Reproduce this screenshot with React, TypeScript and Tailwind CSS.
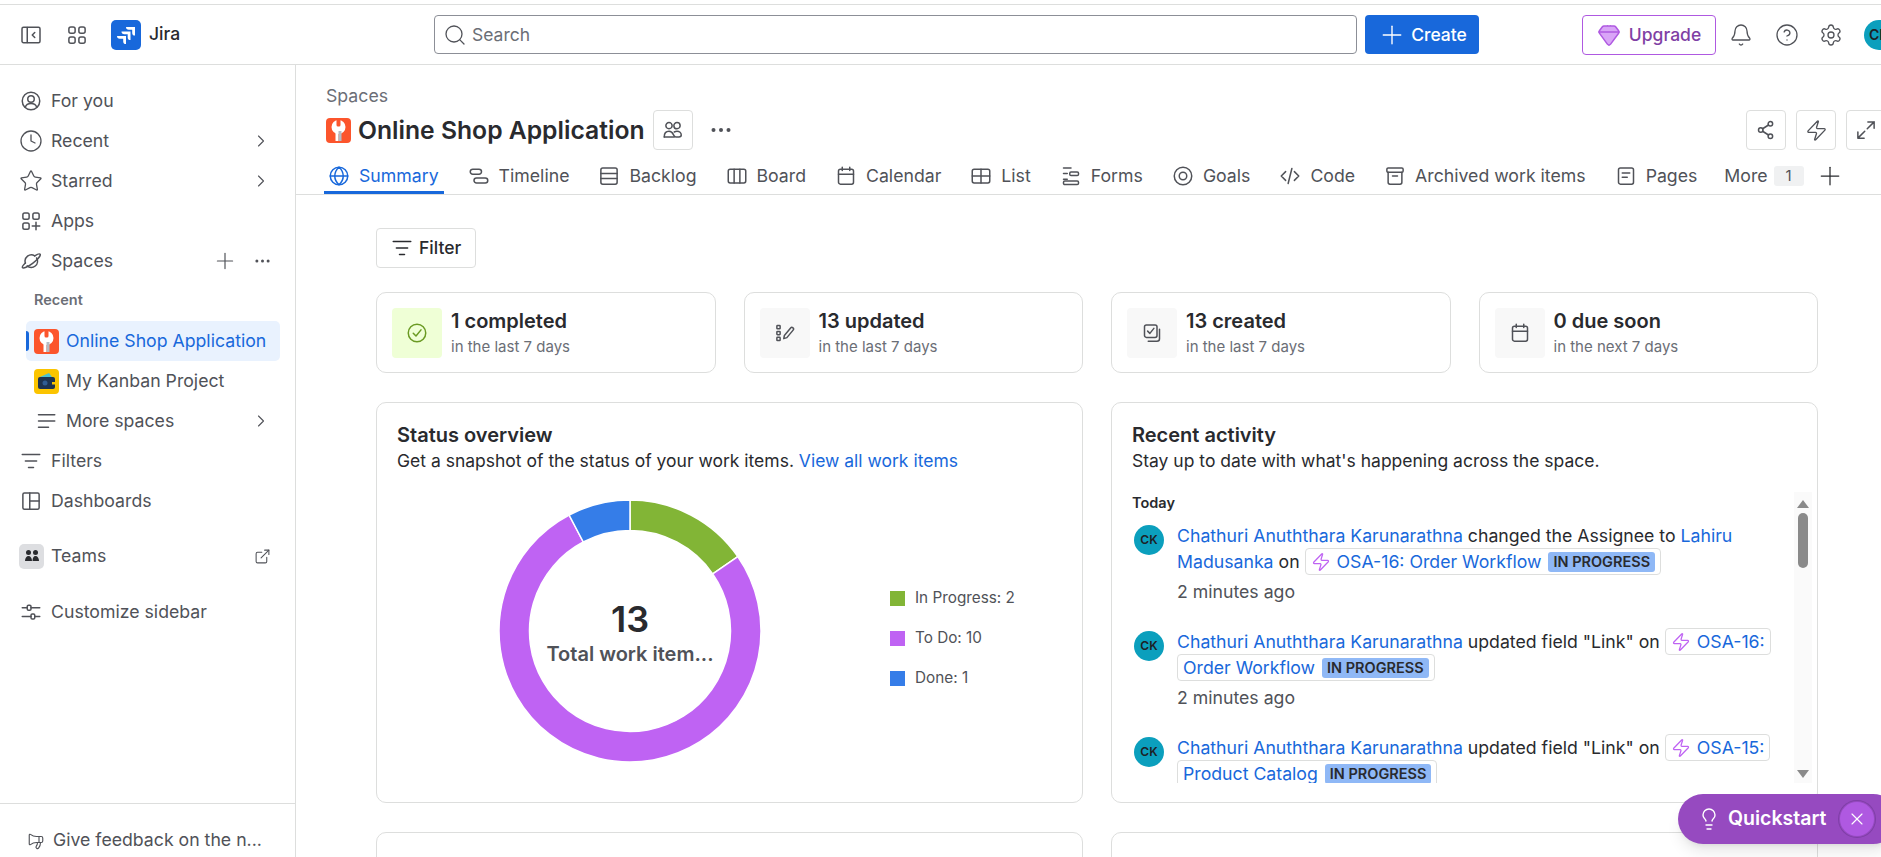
import React from 'react';
import { Bell, ChevronRight, CircleHelp, Clock, ExternalLink, Gem, Lightbulb, Megaphone, Plus, Search, Settings, Star, X, Zap } from 'lucide-react';

type IconProps = { size?: number; className?: string; children: React.ReactNode };

// 16 unit grid, same proportions as the product's own icon set
function Ico({ size = 20, className = 'text-[#505258]', children }: IconProps) {
  return (
    <svg width={size} height={size} viewBox="0 0 16 16" fill="none" stroke="currentColor" strokeWidth="1.2" strokeLinecap="round" strokeLinejoin="round" className={`shrink-0 ${className}`}>
      {children}
    </svg>
  );
}

function Dots({ width = 20 }: { width?: number }) {
  return (
    <svg width={width} height="6" viewBox="0 0 20 6" fill="currentColor" className="shrink-0 text-[#505258]">
      <circle cx="2.500" cy="3" r="2" />
      <circle cx="10" cy="3" r="2" />
      <circle cx="17.500" cy="3" r="2" />
    </svg>
  );
}

const PanelIcon = () => <Ico><rect x="0.8" y="1.8" width="14.4" height="12.4" rx="1.2" /><path d="M5 2v12M11 6 9 8l2 2" /></Ico>;
const GridIcon = () => <Ico><rect x="1.5" y="1.5" width="5" height="5" rx="1.6" /><rect x="9.5" y="1.5" width="5" height="5" rx="1.6" /><rect x="1.5" y="9.5" width="5" height="5" rx="1.6" /><rect x="9.5" y="9.5" width="5" height="5" rx="1.6" /></Ico>;
const UserIcon = () => <Ico><circle cx="8" cy="8" r="7" /><circle cx="8" cy="6.3" r="2.6" /><path d="M3.4 13c.6-2 2-3 4.6-3s4 1 4.6 3" /></Ico>;
const AppsIcon = () => <Ico><rect x="1.5" y="1.5" width="5" height="5" rx="1.4" /><rect x="9.5" y="1.5" width="5" height="5" rx="1.4" /><rect x="1.5" y="9.5" width="5" height="5" rx="1.4" /><path d="M12 9v6M9 12h6" /></Ico>;
const PlanetIcon = () => <Ico><path d="M12.5 5.6a5 5 0 0 1-7.6 6.3M3.5 9.6A5 5 0 0 1 11 3.9" /><path d="M11 3.9c2-1.3 3.9-1.9 4.3-1.3.6 1-2.2 4.4-6 7.3-3.9 2.900-7.500 4.300-8.100 3.400-.4-.6.700-2.200 2.300-3.700" /></Ico>;
const FilterIcon = ({ className }: { className?: string }) => <Ico className={className}><path d="M1 2.800h14M3.500 8h9M6 13.200h4" /></Ico>;
const LinesIcon = () => <Ico><path d="M2 3h13M2 8h13M2 13h8" /></Ico>;
const DashboardIcon = () => <Ico><rect x="1.500" y="1.500" width="13" height="13" rx="1.200" /><path d="M7 1.500v13M7 8h7.500" /></Ico>;
const SlidersIcon = () => <Ico><path d="M1 4.500h4M8 4.500h7M1 11.500h7M11 11.500h4" /><rect x="5" y="2.500" width="3" height="4" rx="1" /><rect x="8" y="9.500" width="3" height="4" rx="1" /></Ico>;
const UsersOutline = () => <Ico><circle cx="4.800" cy="4.500" r="2.500" /><circle cx="11.200" cy="4.500" r="2.500" /><path d="M1 13.500c0-2.700 1.500-4.500 3.800-4.500 1.800 0 2.800 1 3.400 2.500.4 1 1 2 2 2h2.600c1 0 1.800-.6 1.800-1.500 0-1.700-1.500-3-3.400-3-.8 0-1.500.2-2.200.6" /><path d="M1 13.500h8" /></Ico>;
const ShareIcon = () => <Ico><circle cx="11.500" cy="3" r="1.800" /><circle cx="3.800" cy="8" r="1.800" /><circle cx="11.500" cy="13" r="1.800" /><path d="m5.300 7 4.700-3M5.300 9l4.700 3" /></Ico>;
const ExpandIcon = () => <Ico><path d="M9.500 1.500h5v5M14.500 1.500 9 7M6.500 14.500h-5v-5M1.500 14.500 7 9" /></Ico>;
const GlobeIcon = () => <Ico className="text-[#1868db]"><circle cx="8" cy="8" r="7" /><path d="M1 8h14M8 1c-4.500 4-4.500 10 0 14M8 1c4.500 4 4.500 10 0 14" /></Ico>;
const TimelineIcon = () => <Ico><rect x="1" y="2.500" width="9" height="4" rx="2" /><rect x="4" y="9.500" width="11" height="4" rx="2" /></Ico>;
const BacklogIcon = () => <Ico><rect x="1.500" y="1.500" width="13" height="13" rx="1.500" /><path d="M1.500 6h13M1.500 10h13" /></Ico>;
const BoardIcon = () => <Ico><rect x="1" y="2.500" width="14" height="11" rx="1.500" /><path d="M5.700 2.500v11M10.300 2.500v11" /></Ico>;
const CalendarIcon = () => <Ico><rect x="2" y="2.500" width="12" height="12" rx="1.500" /><path d="M2 6.500h12M5 1v2.500M11 1v2.500" /></Ico>;
const ListIcon = () => <Ico><rect x="1" y="2.500" width="14" height="11" rx="1.500" /><path d="M1 8h14M8 2.500v11" /></Ico>;
const FormsIcon = () => <Ico><path d="M2 1.500h6M2 6h3" /><rect x="7" y="4.800" width="7" height="2.800" rx="1" /><path d="M2 10.500h3" /><rect x="2" y="12" width="12" height="2.800" rx="1" /></Ico>;
const GoalsIcon = () => <Ico><circle cx="8" cy="8" r="7" /><circle cx="8" cy="8" r="3" /></Ico>;
const CodeIcon = () => <Ico><path d="M4.500 4.500 1 8l3.500 3.500M11.500 4.500 15 8l-3.500 3.500M9.500 2l-3 12" /></Ico>;
const ArchiveIcon = () => <Ico><rect x="1.500" y="1.500" width="13" height="3.500" rx="1" /><path d="M2.500 5v8a1.500 1.500 0 0 0 1.500 1.500h8a1.500 1.500 0 0 0 1.500-1.500V5M6 8h4" /></Ico>;
const PagesIcon = () => <Ico><rect x="2" y="1.500" width="12" height="13" rx="1.500" /><path d="M5 5.500h6M5 9h4" /></Ico>;
const CheckCircle = () => <Ico className="text-[#6a9a23]"><circle cx="8" cy="8" r="7" /><path d="m5 8.200 2.200 2.200L11.200 5.500" /></Ico>;
const UpdatedIcon = () => <Ico><rect x="1.500" y="2" width="2.600" height="2.600" rx=".5" /><rect x="1.500" y="6.700" width="2.600" height="2.600" rx=".5" /><rect x="1.500" y="11.400" width="2.600" height="2.600" rx=".5" /><path d="m7 12.500.5-2.500 5-6a1.300 1.300 0 0 1 2 1.700l-5 6z" /></Ico>;
const CreatedIcon = () => <Ico><rect x="2" y="1.500" width="10" height="10" rx="1.500" /><path d="m4.500 6.500 1.800 1.800 3.200-4M14 5v7.500a2 2 0 0 1-2 2H5" /></Ico>;

function JiraLogo() {
  return (
    <div className="w-[30px] h-[30px] rounded-[5px] bg-[#1868db] flex items-center justify-center shrink-0">
      <svg width="22" height="22" viewBox="0 0 22 22" fill="#fff">
        <path d="M11 3h9v8.500c-1.800 0-2.800-1-2.800-2.600V5.800h-3.400C12 5.800 11 4.800 11 3z" />
        <path d="M6.500 7.500h9v8.500c-1.800 0-2.800-1-2.800-2.600v-3.100H9.300c-1.800 0-2.800-1-2.800-2.800z" />
        <path d="M2 12h9v8c-1.800 0-2.800-1-2.800-2.600v-2.600H4.800C3 14.800 2 13.800 2 12z" />
      </svg>
    </div>
  );
}

function WrenchLogo() {
  return (
    <svg width="25" height="25" viewBox="0 0 25 25" className="shrink-0">
      <rect width="25" height="25" rx="4" fill="#fc552c" />
      <circle cx="12.500" cy="9" r="7" fill="#fff" />
      <rect x="10.500" y="0" width="4" height="8.500" rx="1.500" fill="#fc552c" />
      <path d="M9.500 13h3v10h-3z" fill="#fff" />
      <path d="M12.500 13h3v10h-3z" fill="#b5bcc4" />
    </svg>
  );
}

function WalletLogo() {
  return (
    <svg width="25" height="25" viewBox="0 0 25 25" className="shrink-0">
      <rect width="25" height="25" rx="4" fill="#fbc400" />
      <path d="M6 8 15 4l3 4z" fill="#4bc1d2" />
      <rect x="4" y="8" width="17" height="12" rx="2" fill="#1d3250" />
      <circle cx="11" cy="14" r="2.500" fill="#2f5c94" />
      <rect x="18" y="13" width="3" height="2.500" fill="#fbc400" />
    </svg>
  );
}

const NAV_TOP = [
  { label: 'For you', icon: <UserIcon /> },
  { label: 'Recent', icon: <Clock size={24} strokeWidth={1.3} className="text-[#505258] -m-[2px]" />, chevron: true },
  { label: 'Starred', icon: <Star size={24} strokeWidth={1.3} className="text-[#505258] -m-[2px]" />, chevron: true },
  { label: 'Apps', icon: <AppsIcon /> },
];

const TABS = [
  { label: 'Summary', icon: <GlobeIcon />, active: true },
  { label: 'Timeline', icon: <TimelineIcon /> },
  { label: 'Backlog', icon: <BacklogIcon /> },
  { label: 'Board', icon: <BoardIcon /> },
  { label: 'Calendar', icon: <CalendarIcon /> },
  { label: 'List', icon: <ListIcon /> },
  { label: 'Forms', icon: <FormsIcon /> },
  { label: 'Goals', icon: <GoalsIcon /> },
  { label: 'Code', icon: <CodeIcon /> },
  { label: 'Archived work items', icon: <ArchiveIcon /> },
  { label: 'Pages', icon: <PagesIcon /> },
];

const STATS = [
  { title: '1 completed', sub: 'in the last 7 days', icon: <CheckCircle />, tile: 'bg-[#efffd6]' },
  { title: '13 updated', sub: 'in the last 7 days', icon: <UpdatedIcon />, tile: 'bg-[#f8f8f8]' },
  { title: '13 created', sub: 'in the last 7 days', icon: <CreatedIcon />, tile: 'bg-[#f8f8f8]' },
  { title: '0 due soon', sub: 'in the next 7 days', icon: <CalendarIcon />, tile: 'bg-[#f8f8f8]' },
];

const LEGEND = [
  { label: 'In Progress: 2', color: 'bg-[#82b536]' },
  { label: 'To Do: 10', color: 'bg-[#bf63f3]' },
  { label: 'Done: 1', color: 'bg-[#357de8]' },
];

function NavRow({ icon, label, right }: { icon: React.ReactNode; label: string; right?: React.ReactNode }) {
  return (
    <div className="h-10 flex items-center pl-[21px] pr-[25px] text-[#505258]">
      <span className="w-[30px] shrink-0 flex">{icon}</span>
      <span className="flex-1 truncate">{label}</span>
      {right}
    </div>
  );
}

function Sidebar() {
  return (
    <aside className="w-[296px] shrink-0 border-r border-[#dddedd] flex flex-col text-[17.7px]">
      <div className="flex-1 pt-[16px]">
        {NAV_TOP.map((n) => (
          <NavRow key={n.label} icon={n.icon} label={n.label} right={n.chevron ? <ChevronRight size={20} strokeWidth={1.3} className="text-[#505258] -mr-[1px]" /> : undefined} />
        ))}
        <NavRow
          icon={<PlanetIcon />}
          label="Spaces"
          right={
            <div className="flex items-center gap-[17px] text-[#505258]">
              <Plus size={26} strokeWidth={1.1} />
              <Dots width={15} />
            </div>
          }
        />
        <div className="h-10 flex items-center pl-[34px] pb-[3px] text-[14.5px] font-semibold text-[#6b6e76]">Recent</div>
        <div className="relative h-10 ml-[26px] mr-[15px] rounded-[5px] bg-[#e9f2fe] flex items-center pl-2 gap-[7px] text-[#1868db]">
          <span className="absolute left-0 top-[10px] w-[3px] h-5 bg-[#1868db] rounded-r-sm" />
          <WrenchLogo />
          <span>Online Shop Application</span>
        </div>
        <div className="h-10 ml-[26px] mr-[15px] flex items-center pl-2 gap-[7px] text-[#505258]">
          <WalletLogo />
          <span>My Kanban Project</span>
        </div>
        <div className="h-10 flex items-center pl-[36px] pr-[25px] text-[#505258]">
          <span className="w-[30px] shrink-0 flex"><LinesIcon /></span>
          <span className="flex-1">More spaces</span>
          <ChevronRight size={20} strokeWidth={1.3} className="-mr-[1px]" />
        </div>
        <NavRow icon={<FilterIcon />} label="Filters" />
        <NavRow icon={<DashboardIcon />} label="Dashboards" />
        <div className="h-10 mt-[15px] flex items-center pl-[19px] pr-[25px] text-[#505258]">
          <span className="w-[25px] h-[25px] mr-[7px] rounded-[5px] bg-[#dddee1] flex items-center justify-center shrink-0">
            <svg width="16" height="16" viewBox="0 0 16 16" fill="#292a2e">
              <circle cx="4.500" cy="4.500" r="2.500" />
              <circle cx="11.500" cy="4.500" r="2.500" />
              <path d="M1 13c0-3 1.500-5 3.500-5S8 10 8 13zM8.500 13c0-3 1-5 3-5s3.500 2 3.500 5z" />
            </svg>
          </span>
          <span className="flex-1">Teams</span>
          <ExternalLink size={17} strokeWidth={1.5} className="-mr-[1px]" />
        </div>
        <div className="mt-[16px]">
          <NavRow icon={<SlidersIcon />} label="Customize sidebar" />
        </div>
      </div>
      <div className="h-[54px] border-t border-[#dddedd] flex items-center gap-[8px] pl-[27px] pt-[20px] text-[#505258]">
        <Megaphone size={18} strokeWidth={1.5} className="-scale-x-100" />
        <span>Give feedback on the n...</span>
      </div>
    </aside>
  );
}

function TopBar() {
  return (
    <header className="h-[61px] shrink-0 border-y border-[#dddedd] flex items-center text-[17.5px]">
      <div className="w-[434px] shrink-0 flex items-center pl-[21px]">
        <PanelIcon />
        <span className="ml-[26px]"><GridIcon /></span>
        <span className="ml-[24px]"><JiraLogo /></span>
        <span className="ml-2 text-[17.5px] font-medium text-[#292a2e]">Jira</span>
      </div>
      <div className="w-[923px] h-[39px] shrink-0 rounded-[4px] border border-[#8c8f97] flex items-center gap-[7px] pl-[9px] pr-[9px] text-[#6b6e76]">
        <Search size={24} strokeWidth={1.3} className="text-[#505258] -mx-[1px]" />
        <span className="pt-[1px] -ml-[1px]">Search</span>
      </div>
      <div className="ml-2 w-[114px] h-[39px] shrink-0 rounded-[4px] bg-[#1868db] text-white font-medium flex items-center justify-center gap-[4px]">
        <Plus size={30} strokeWidth={1.1} className="-my-1" />
        <span className="pt-[1px]">Create</span>
      </div>
      <div className="ml-[103px] w-[134px] h-[40px] shrink-0 rounded-[4px] border border-[#af59e1] text-[#803fa5] font-medium flex items-center justify-center gap-[8px]">
        <Gem size={24} strokeWidth={1.5} className="text-[#af59e1]" fill="#d9a5f7" />
        <span className="pt-[1px]">Upgrade</span>
      </div>
      <Bell size={24} strokeWidth={1.3} className="ml-[13px] shrink-0 text-[#505258]" />
      <CircleHelp size={24} strokeWidth={1.3} className="ml-[22px] shrink-0 text-[#505258]" />
      <Settings size={24} strokeWidth={1.3} className="ml-[20px] shrink-0 text-[#505258]" />
      <div className="ml-[21px] w-[30px] h-[30px] shrink-0 rounded-full bg-[#0b9fbd] flex items-center justify-center text-[14px] font-semibold text-[#1d2125]">CK</div>
    </header>
  );
}

function IconButton({ children }: { children: React.ReactNode }) {
  return <div className="w-10 h-10 shrink-0 rounded-[4px] border border-[#dddedd] flex items-center justify-center">{children}</div>;
}

function SpaceHeader() {
  return (
    <div className="shrink-0 pl-[28px] border-b border-[#dddedd]">
      <div className="pl-[2px] pt-[20px] text-[17.7px] leading-[22px] text-[#6b6e76]">Spaces</div>
      <div className="pl-[2px] h-10 mt-[3px] flex items-center">
        <WrenchLogo />
        <h1 className="ml-[7px] pt-[2px] text-[24.7px] font-semibold text-[#292a2e] whitespace-nowrap">Online Shop Application</h1>
        <span className="ml-2"><IconButton><UsersOutline /></IconButton></span>
        <span className="ml-[18px]"><Dots width={20} /></span>
        <div className="ml-auto flex gap-[10px] -mr-[5px] shrink-0">
          <IconButton><ShareIcon /></IconButton>
          <IconButton><Zap size={23} strokeWidth={1.4} className="text-[#505258]" /></IconButton>
          <IconButton><ExpandIcon /></IconButton>
        </div>
      </div>
      <nav className="h-[44px] flex items-stretch gap-5 text-[17.7px] whitespace-nowrap">
        {TABS.map((t) => (
          <div key={t.label} className={`flex items-center gap-[10px] px-[5px] border-b-[3px] pt-[11px] ${t.active ? 'border-[#1868db] text-[#1868db]' : 'border-transparent text-[#505258]'}`}>
            {t.icon}
            <span>{t.label}</span>
          </div>
        ))}
        <div className="flex items-center px-[5px] pb-[3px] pt-[11px] text-[#505258] -ml-[3px]">
          More
          <span className="ml-[6px] w-[30px] h-[20px] rounded-[3px] bg-[#f0f1f2] text-[15px] flex items-center justify-center">1</span>
          <Plus size={30} strokeWidth={1} className="ml-[11px] text-[#292a2e]" />
        </div>
      </nav>
    </div>
  );
}

function StatCard({ title, sub, icon, tile }: { title: string; sub: string; icon: React.ReactNode; tile: string }) {
  return (
    <div className="h-[81px] rounded-[10px] border border-[#dddedd] flex items-center pl-[15px] gap-[9px]">
      <div className={`w-[50px] h-[50px] rounded-[4px] flex items-center justify-center shrink-0 ${tile}`}>{icon}</div>
      <div>
        <div className="text-[20px] leading-[24px] font-semibold text-[#292a2e]">{title}</div>
        <div className="mt-1 text-[15px] leading-[20px] text-[#6b6e76]">{sub}</div>
      </div>
    </div>
  );
}

// start and end are fractions of the full circle, clockwise from the top
function arc(start: number, end: number) {
  const c = 131;
  const R = 131;
  const r = 100.5;
  const pt = (rad: number, f: number) => {
    const a = f * Math.PI * 2;
    return `${(c + rad * Math.sin(a)).toFixed(2)} ${(c - rad * Math.cos(a)).toFixed(2)}`;
  };
  const large = end - start > 0.5 ? 1 : 0;
  return `M${pt(R, start)} A${R} ${R} 0 ${large} 1 ${pt(R, end)} L${pt(r, end)} A${r} ${r} 0 ${large} 0 ${pt(r, start)} Z`;
}

function StatusPanel() {
  return (
    <section className="h-[401px] rounded-[10px] border border-[#dddedd] pt-5 px-5 overflow-hidden">
      <h2 className="text-[20px] leading-[24px] font-semibold text-[#292a2e]">Status overview</h2>
      <p className="mt-[2px] text-[17.5px] leading-[24px] text-[#292a2e] whitespace-nowrap">
        Get a snapshot of the status of your work items. <span className="text-[#1868db]">View all work items</span>
      </p>
      <div className="mt-[27px] flex items-center pl-[102px]">
        <div className="relative w-[262px] h-[262px] shrink-0">
          <svg width="262" height="262" viewBox="0 0 262 262">
            <path d={arc(0, 2 / 13)} fill="#82b536" stroke="#fff" strokeWidth="1.500" />
            <path d={arc(2 / 13, 12 / 13)} fill="#bf63f3" stroke="#fff" strokeWidth="1.500" />
            <path d={arc(12 / 13, 1)} fill="#357de8" stroke="#fff" strokeWidth="1.500" />
          </svg>
          <div className="absolute inset-0 flex flex-col items-center justify-center pt-[2px]">
            <div className="text-[36px] leading-[44px] font-semibold text-[#292a2e]">13</div>
            <div className="text-[20px] leading-[26px] font-semibold text-[#505258]">Total work item...</div>
          </div>
        </div>
        <div className="ml-[129px] mt-[14px] flex flex-col gap-[20px]">
          {LEGEND.map((l) => (
            <div key={l.label} className="flex items-center gap-[10px] h-5 text-[15.3px] text-[#505258]">
              <span className={`w-[15px] h-[15px] ${l.color}`} />
              {l.label}
            </div>
          ))}
        </div>
      </div>
    </section>
  );
}

function WorkChip({ id, title }: { id: string; title: string }) {
  return (
    <span className="box-decoration-clone border border-[#dddedd] rounded-[4px] px-[5px] py-[2px]">
      <Zap size={20} strokeWidth={1.5} className="inline text-[#bf63f3] align-[-4px] mr-[6px]" />
      <span className="text-[#1868db]">{id}: {title}</span>
      <span className="ml-[7px] inline-block align-[1px] h-[20px] leading-[20px] px-[5px] rounded-[3px] bg-[#8fb8f6] text-[14.5px] font-semibold text-[#292a2e]">IN PROGRESS</span>
    </span>
  );
}

function ActivityRow({ children }: { children: React.ReactNode }) {
  return (
    <div className="flex mb-[24px]">
      <div className="mt-[2px] ml-[2px] w-[30px] h-[30px] rounded-full bg-[#0b9fbd] flex items-center justify-center text-[12px] font-semibold text-[#1d2125] shrink-0">CK</div>
      <div className="ml-[13px] w-[600px] text-[17.7px] leading-[26px] text-[#292a2e]">
        <div>{children}</div>
        <div className="mt-1 text-[#505258]">2 minutes ago</div>
      </div>
    </div>
  );
}

const PERSON = 'Chathuri Anuththara Karunarathna';

function ActivityPanel() {
  return (
    <section className="h-[401px] rounded-[10px] border border-[#dddedd] pt-5 pl-5 pr-[5px] pb-[19px] flex flex-col overflow-hidden">
      <h2 className="text-[20px] leading-[24px] font-semibold text-[#292a2e]">Recent activity</h2>
      <p className="mt-[2px] text-[17.5px] leading-[24px] text-[#292a2e]">Stay up to date with what's happening across the space.</p>
      <div className="mt-[19px] flex-1 min-h-0 flex">
        <div className="flex-1 min-w-0 overflow-hidden">
          <div className="pt-[1px] text-[14.5px] leading-[20px] font-semibold text-[#292a2e]">Today</div>
          <div className="mt-[10px]">
            <ActivityRow>
              <span className="text-[#1868db]">{PERSON}</span> changed the Assignee to <span className="text-[#1868db]">Lahiru Madusanka</span> on <WorkChip id="OSA-16" title="Order Workflow" />
            </ActivityRow>
            <ActivityRow>
              <span className="text-[#1868db]">{PERSON}</span> updated field "Link" on <WorkChip id="OSA-16" title="Order Workflow" />
            </ActivityRow>
            <ActivityRow>
              <span className="text-[#1868db]">{PERSON}</span> updated field "Link" on <WorkChip id="OSA-15" title="Product Catalog" />
            </ActivityRow>
          </div>
        </div>
        <div className="w-[18px] shrink-0 bg-[#fafafa] flex flex-col items-center pt-2 pb-[5px]">
          <svg width="12" height="8" viewBox="0 0 12 8" fill="#8a8a8a"><path d="M6 0l6 8H0z" /></svg>
          <div className="mt-[5px] w-[10px] h-[55px] rounded-full bg-[#8a8a8a]" />
          <svg width="12" height="8" viewBox="0 0 12 8" fill="#8a8a8a" className="mt-auto"><path d="M6 8 0 0h12z" /></svg>
        </div>
      </div>
    </section>
  );
}

export default function App() {
  return (
    <div className="relative w-[1881px] h-[857px] overflow-hidden bg-white font-['Inter',sans-serif] flex flex-col">
      <div className="h-1 shrink-0" />
      <TopBar />
      <div className="flex-1 min-h-0 flex">
        <Sidebar />
        <main className="flex-1 min-w-0 flex flex-col">
          <SpaceHeader />
          <div className="pl-[80px] pr-[63px] pt-[33px]">
            <div className="w-[100px] h-10 rounded-[4px] border border-[#dddedd] flex items-center gap-[7px] pl-[15px] text-[17.5px] font-medium text-[#292a2e]">
              <FilterIcon className="text-[#292a2e]" />
              Filter
            </div>
            <div className="mt-6 grid grid-cols-4 gap-[28px]">
              {STATS.map((s) => (
                <StatCard key={s.title} {...s} />
              ))}
            </div>
            <div className="mt-[29px] grid grid-cols-2 gap-[28px]">
              <StatusPanel />
              <ActivityPanel />
            </div>
            <div className="mt-[29px] grid grid-cols-2 gap-[28px]">
              <div className="h-[200px] rounded-[10px] border border-[#dddedd]" />
              <div className="h-[200px] rounded-[10px] border border-[#dddedd]" />
            </div>
          </div>
        </main>
      </div>
      <div className="absolute left-[1678px] top-[794px] w-[220px] h-[50px] rounded-full bg-[#964ac0] shadow-lg flex items-center pl-[19px] text-white">
        <Lightbulb size={24} strokeWidth={1.4} />
        <span className="ml-[7px] text-[19.5px] font-semibold">Quickstart</span>
        <span className="ml-[14px] w-[34px] h-[34px] rounded-full bg-[#af59e1] ring-1 ring-[#7f3fa6] ring-offset-1 ring-offset-[#964ac0] flex items-center justify-center">
          <X size={20} strokeWidth={1.4} />
        </span>
      </div>
    </div>
  );
}
